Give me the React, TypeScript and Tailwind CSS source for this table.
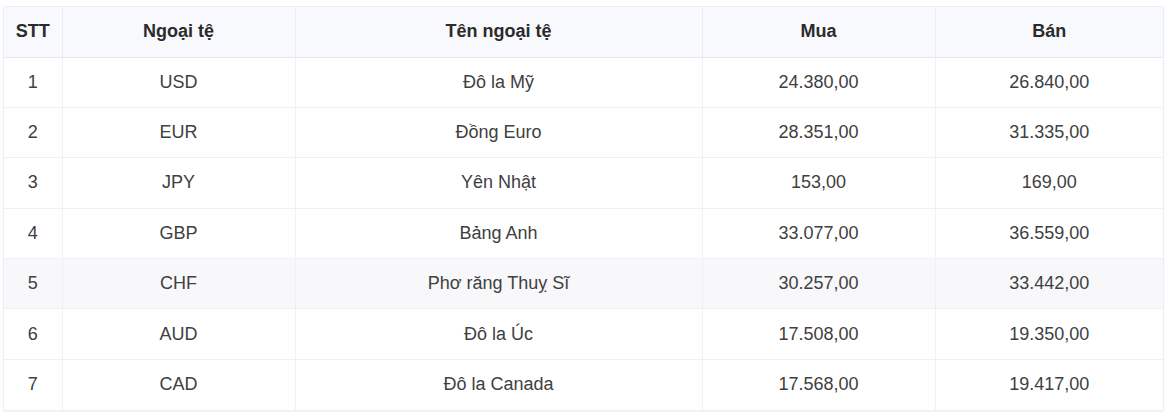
const rows = [
  { stt: 1, code: "USD", name: "Đô la Mỹ", buy: "24.380,00", sell: "26.840,00" },
  { stt: 2, code: "EUR", name: "Đồng Euro", buy: "28.351,00", sell: "31.335,00" },
  { stt: 3, code: "JPY", name: "Yên Nhật", buy: "153,00", sell: "169,00" },
  { stt: 4, code: "GBP", name: "Bảng Anh", buy: "33.077,00", sell: "36.559,00" },
  { stt: 5, code: "CHF", name: "Phơ răng Thuỵ Sĩ", buy: "30.257,00", sell: "33.442,00" },
  { stt: 6, code: "AUD", name: "Đô la Úc", buy: "17.508,00", sell: "19.350,00" },
  { stt: 7, code: "CAD", name: "Đô la Canada", buy: "17.568,00", sell: "19.417,00" },
];

// hàng đang hover trong ảnh
const HOVER_ROW = 5;

export default function App() {
  return (
    <div className="bg-white min-h-[412px] pt-[6px] pl-[3px]" style={{ fontFamily: '"Liberation Sans", Arial, sans-serif' }}>
      <div className="w-[1161px] border border-[#eceef1] rounded-[2px] shadow-[0_1px_2px_rgba(0,0,0,0.06)] overflow-hidden">
        <table className="w-full table-fixed border-collapse text-[18px] text-[#404040]">
          <colgroup>
            <col className="w-[58px]" />
            <col className="w-[233px]" />
            <col className="w-[407px]" />
            <col className="w-[233px]" />
            <col />
          </colgroup>
          <thead>
            <tr className="bg-[#f8f9fc] h-[50px] border-b border-[#e6e8eb]">
              <th className="font-bold text-[#2b2b2b] text-center">STT</th>
              <th className="font-bold text-[#2b2b2b] text-center border-l border-[#eceef1]">Ngoại tệ</th>
              <th className="font-bold text-[#2b2b2b] text-center border-l border-[#eceef1]">Tên ngoại tệ</th>
              <th className="font-bold text-[#2b2b2b] text-center border-l border-[#eceef1]">Mua</th>
              <th className="font-bold text-[#2b2b2b] text-center border-l border-[#eceef1]">Bán</th>
            </tr>
          </thead>
          <tbody>
            {rows.map((r) => (
              <tr
                key={r.stt}
                className={`h-[50.4px] border-b border-[#f0f1f3] last:border-b-0 ${r.stt === HOVER_ROW ? "bg-[#f8f8fb]" : "bg-white"}`}
              >
                <td className="text-center">{r.stt}</td>
                <td className="text-center border-l border-[#f0f1f3]">{r.code}</td>
                <td className="text-center border-l border-[#f0f1f3]">{r.name}</td>
                <td className="text-center border-l border-[#f0f1f3]">{r.buy}</td>
                <td className="text-center border-l border-[#f0f1f3]">{r.sell}</td>
              </tr>
            ))}
          </tbody>
        </table>
      </div>
    </div>
  );
}
